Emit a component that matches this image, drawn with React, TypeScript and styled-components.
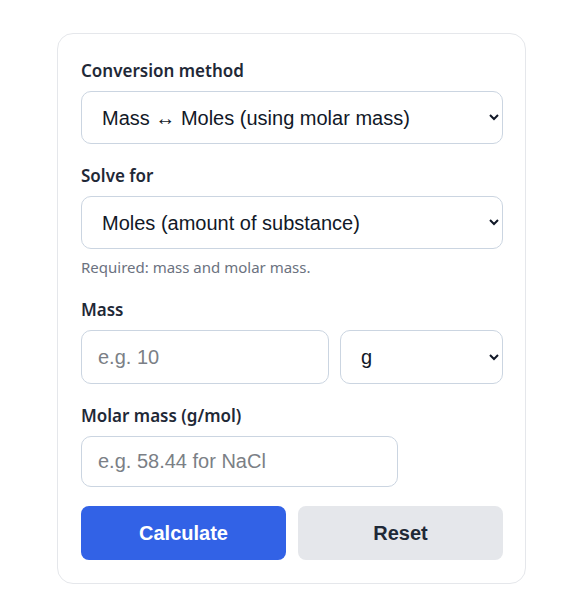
import styled, { createGlobalStyle } from "styled-components";

const GlobalStyle = createGlobalStyle`
  * {
    box-sizing: border-box;
  }

  body {
    margin: 0;
    background: #ffffff;
    font-family: "Noto Sans", "Open Sans", sans-serif;
  }
`;

const Page = styled.div`
  padding: 33px 0 10px 57px;
`;

const Card = styled.form`
  width: 469px;
  background: #ffffff;
  border: 1px solid #e5e7eb;
  border-radius: 16px;
  padding: 25px 22px 23px 23px;
  display: flex;
  flex-direction: column;
`;

const Field = styled.div`
  display: flex;
  flex-direction: column;
  margin-bottom: 20px;
`;

const Label = styled.label`
  font-size: 17px;
  line-height: 24px;
  font-weight: 600;
  color: #1f2937;
  margin-bottom: 8px;
`;

const Hint = styled.div`
  margin-top: 7px;
  font-size: 15px;
  line-height: 22px;
  color: #6b7280;
`;

const Select = styled.select`
  width: 100%;
  height: 53px;
  padding: 0 12px 0 16px;
  font-family: "Liberation Sans", Arial, sans-serif;
  font-size: 20px;
  color: #111827;
  background: #ffffff;
  border: 1px solid #cbd5e1;
  border-radius: 10px;
`;

const Input = styled.input<{ $maxWidth?: number }>`
  width: 100%;
  max-width: ${(p) => (p.$maxWidth ? `${p.$maxWidth}px` : "none")};
  height: 51px;
  padding: 0 16px;
  font-family: "Liberation Sans", Arial, sans-serif;
  font-size: 20px;
  color: #111827;
  background: #ffffff;
  border: 1px solid #cbd5e1;
  border-radius: 10px;

  &::placeholder {
    color: #7b7f86;
  }
`;

const Row = styled.div`
  display: grid;
  grid-template-columns: 1fr 163px;
  gap: 11px;

  ${Input}, ${Select} {
    height: 54px;
  }
`;

const Actions = styled.div`
  display: grid;
  grid-template-columns: 1fr 1fr;
  gap: 12px;
  margin-top: -1px;
`;

const Button = styled.button<{ $primary?: boolean }>`
  height: 54px;
  border: none;
  border-radius: 8px;
  font-family: "Liberation Sans", Arial, sans-serif;
  font-size: 20px;
  font-weight: 700;
  cursor: pointer;
  background: ${(p) => (p.$primary ? "#3262e6" : "#e5e7eb")};
  color: ${(p) => (p.$primary ? "#ffffff" : "#1f2937")};
`;

export default function App() {
  return (
    <>
      <GlobalStyle />
      <Page>
        <Card onSubmit={(e) => e.preventDefault()}>
          <Field>
            <Label>Conversion method</Label>
            <Select defaultValue="mass-moles">
              <option value="mass-moles">Mass ↔ Moles (using molar mass)</option>
              <option value="moles-particles">Moles ↔ Particles</option>
            </Select>
          </Field>

          <Field>
            <Label>Solve for</Label>
            <Select defaultValue="moles">
              <option value="moles">Moles (amount of substance)</option>
              <option value="mass">Mass</option>
            </Select>
            <Hint>Required: mass and molar mass.</Hint>
          </Field>

          <Field>
            <Label>Mass</Label>
            <Row>
              <Input type="text" placeholder="e.g. 10" />
              <Select defaultValue="g">
                <option value="g">g</option>
                <option value="kg">kg</option>
                <option value="mg">mg</option>
              </Select>
            </Row>
          </Field>

          <Field>
            <Label>Molar mass (g/mol)</Label>
            <Input type="text" placeholder="e.g. 58.44 for NaCl" $maxWidth={317} />
          </Field>

          <Actions>
            <Button type="submit" $primary>
              Calculate
            </Button>
            <Button type="button">Reset</Button>
          </Actions>
        </Card>
      </Page>
    </>
  );
}
